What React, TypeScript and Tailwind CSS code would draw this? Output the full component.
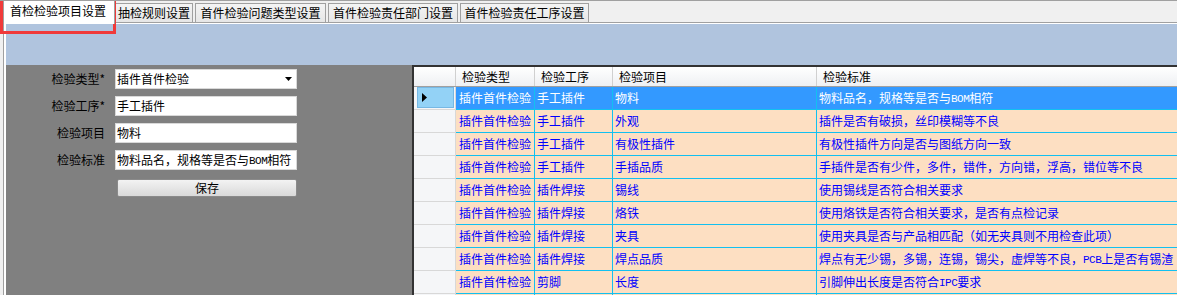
import { ReactNode } from "react";

const rows = [
  ["插件首件检验", "手工插件", "物料", "物料品名，规格等是否与BOM相符"],
  ["插件首件检验", "手工插件", "外观", "插件是否有破损，丝印模糊等不良"],
  ["插件首件检验", "手工插件", "有极性插件", "有极性插件方向是否与图纸方向一致"],
  ["插件首件检验", "手工插件", "手插品质", "手插件是否有少件，多件，错件，方向错，浮高，错位等不良"],
  ["插件首件检验", "插件焊接", "锡线", "使用锡线是否符合相关要求"],
  ["插件首件检验", "插件焊接", "烙铁", "使用烙铁是否符合相关要求，是否有点检记录"],
  ["插件首件检验", "插件焊接", "夹具", "使用夹具是否与产品相匹配（如无夹具则不用检查此项）"],
  ["插件首件检验", "插件焊接", "焊点品质", "焊点有无少锡，多锡，连锡，锡尖，虚焊等不良，PCB上是否有锡渣"],
  ["插件首件检验", "剪脚", "长度", "引脚伸出长度是否符合IPC要求"],
  ["", "", "", ""],
];

const tabs = [
  { label: "抽检规则设置", w: "w-[78px]" },
  { label: "首件检验问题类型设置", w: "w-[131px]" },
  { label: "首件检验责任部门设置", w: "w-[130px]" },
  { label: "首件检验责任工序设置", w: "w-[129px]" },
];

// half-width latin runs are narrow in the original, render them in a mono face
function Txt({ s }: { s: string }) {
  const parts = s.split(/([A-Za-z0-9]+)/);
  return (
    <>
      {parts.map((p, i) =>
        /^[A-Za-z0-9]+$/.test(p) ? (
          <span
            key={i}
            className="text-[11px] tracking-[-0.5px] relative top-[1px]"
            style={{ fontFamily: '"Liberation Mono", monospace' }}
          >
            {p}
          </span>
        ) : (
          <span key={i}>{p}</span>
        )
      )}
    </>
  );
}

function FormRow({ label, children }: { label: string; children: ReactNode }) {
  return (
    <div className="flex items-center h-[20px]">
      <div className="w-[99px] text-right text-black whitespace-nowrap">{label}</div>
      <div className="ml-[10px] w-[182px] h-[20px] bg-white border border-[#d9d9d9] flex items-center pl-[1px] text-black whitespace-nowrap overflow-hidden relative">
        {children}
      </div>
    </div>
  );
}

export default function App() {
  return (
    <div
      className="relative w-[1177px] h-[295px] overflow-hidden bg-[#f0f0f0] border-t border-[#a0a0a0] text-[12px] leading-[14px]"
      style={{ fontFamily: '"Noto Sans CJK SC", "Liberation Sans", sans-serif' }}
    >
      {/* Tabs */}
      <div className="flex items-end h-[22px] border-b border-[#a0a0a0] pl-[3px]">
        <div className="relative z-10 -mb-[2px] w-[112px] h-[24px] bg-white border border-b-0 border-[#a0a0a0] pl-[6px] pt-[3px] text-black whitespace-nowrap">
          首检检验项目设置
        </div>
        {tabs.map((t, i) => (
          <div
            key={t.label}
            className={`${t.w} ${i === 0 ? "ml-0" : "ml-[2px]"} h-[19px] bg-gradient-to-b from-[#f4f4f4] to-[#e6e6e6] border border-b-0 border-[#a0a0a0] flex items-center justify-center text-black whitespace-nowrap`}
          >
            {t.label}
          </div>
        ))}
      </div>

      {/* Page */}
      <div className="ml-[3px] h-[272px] border-l border-[#a0a0a0] flex flex-col">
        <div className="flex-1 flex flex-col border-l-2 border-t border-white">
          <div className="h-[41px] bg-[#b0c4de]" />
          <div className="flex-1 flex min-h-0">
            {/* Left form panel */}
            <div className="w-[406px] bg-[#808080] pt-[4px] flex flex-col gap-[7px]">
              <FormRow label="检验类型*">
                插件首件检验
                <svg className="absolute right-[4px] top-[7px]" width="7" height="4" viewBox="0 0 7 4">
                  <polygon points="0,0 7,0 3.5,4" fill="#000" />
                </svg>
              </FormRow>
              <FormRow label="检验工序*">手工插件</FormRow>
              <FormRow label="检验项目">物料</FormRow>
              <FormRow label="检验标准">
                <Txt s="物料品名，规格等是否与BOM相符" />
              </FormRow>
              <div className="flex mt-[2px]">
                <button className="ml-[111px] w-[180px] h-[18px] rounded-[2px] border border-[#8a8a8a] bg-gradient-to-b from-[#f3f3f3] to-[#d9d9d9] text-black flex items-center justify-center">
                  保存
                </button>
              </div>
            </div>

            {/* Grid */}
            <div className="flex-1 min-w-0 bg-white border-l-2 border-t-2 border-[#333333] overflow-hidden">
              {/* Header */}
              <div className="flex h-[20px] border-b border-[#a0a0a0] bg-gradient-to-b from-white to-[#eef0f3] text-black whitespace-nowrap">
                <div className="w-[42px] shrink-0 border-r border-[#d0d0d0]" />
                <div className="w-[79px] shrink-0 border-r border-[#d0d0d0] pl-[6px] flex items-center">检验类型</div>
                <div className="w-[78px] shrink-0 border-r border-[#d0d0d0] pl-[6px] flex items-center">检验工序</div>
                <div className="w-[204px] shrink-0 border-r border-[#d0d0d0] pl-[6px] flex items-center">检验项目</div>
                <div className="flex-1 pl-[6px] flex items-center">检验标准</div>
              </div>

              {/* Rows */}
              {rows.map((r, i) => {
                const sel = i === 0;
                return (
                  <div key={i} className="flex h-[23px] whitespace-nowrap">
                    <div className="w-[42px] shrink-0 h-[23px] bg-[#f5f6f8] border-r border-b border-[#d8d8d8] flex items-stretch pl-[3px] pb-[1px]">
                      {sel && (
                        <div className="flex-1 mr-[1px] bg-[#93d2f6] border border-[#76b8e4] flex items-center pl-[4px]">
                          <svg width="5" height="9" viewBox="0 0 5 9">
                            <polygon points="0,0 5,4.5 0,9" fill="#000" />
                          </svg>
                        </div>
                      )}
                    </div>
                    <div
                      className={`flex-1 flex border-b border-[#12c0f0] ${
                        sel ? "bg-[#3399ff] text-white" : "bg-[#fddfc2] text-[#0000ff]"
                      }`}
                    >
                      <div className="w-[79px] shrink-0 border-r border-[#12c0f0] pl-[3px] flex items-center overflow-hidden">{r[0]}</div>
                      <div className="w-[78px] shrink-0 border-r border-[#12c0f0] pl-[2px] flex items-center overflow-hidden">{r[1]}</div>
                      <div className="w-[204px] shrink-0 border-r border-[#12c0f0] pl-[2px] flex items-center overflow-hidden">{r[2]}</div>
                      <div className="flex-1 pl-[2px] flex items-center overflow-hidden">
                        <Txt s={r[3]} />
                      </div>
                    </div>
                  </div>
                );
              })}
            </div>
          </div>
        </div>
      </div>

      {/* Red highlight annotation */}
      <div className="absolute left-0 top-[-1px] w-[116px] h-[34px] border-l-[3px] border-r-[3px] border-b-[3px] border-[#f03a3a] pointer-events-none" />
    </div>
  );
}
